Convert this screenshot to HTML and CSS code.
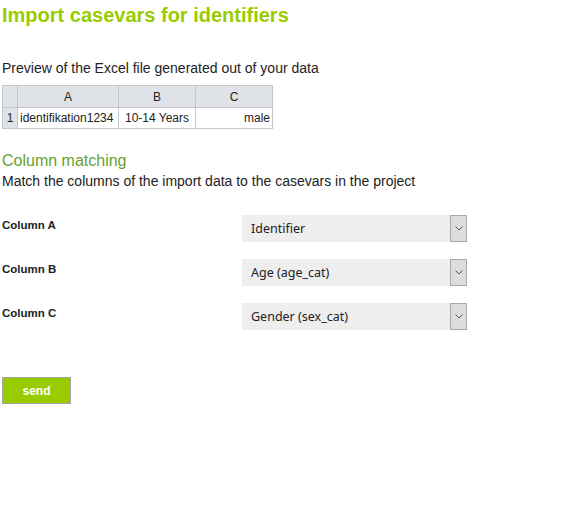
FILE: index.html
```html
<!DOCTYPE html>
<html>
<head>
<meta charset="utf-8">
<link rel="stylesheet" href="styles.css">
</head>
<body>
<div class="page">
  <h1 class="title">Import casevars for identifiers</h1>
  <p class="intro">Preview of the Excel file generated out of your data</p>
  <table class="sheet">
    <tr class="head">
      <th class="corner"></th>
      <th class="col-a">A</th>
      <th class="col-b">B</th>
      <th class="col-c">C</th>
    </tr>
    <tr>
      <th class="rownum">1</th>
      <td class="left">identifikation1234</td>
      <td class="mid">10-14 Years</td>
      <td class="right">male</td>
    </tr>
  </table>
  <h2 class="subtitle">Column matching</h2>
  <p class="desc">Match the columns of the import data to the casevars in the project</p>
  <div class="matches">
    <div class="match-row">
      <span class="label">Column A</span>
      <div class="select"><span class="value">Identifier</span><span class="arrow"><svg width="8" height="5" viewBox="0 0 8 5"><path d="M0.5 0.5 L4 4 L7.5 0.5" fill="none" stroke="#555" stroke-width="1"/></svg></span></div>
    </div>
    <div class="match-row">
      <span class="label">Column B</span>
      <div class="select"><span class="value">Age (age_cat)</span><span class="arrow"><svg width="8" height="5" viewBox="0 0 8 5"><path d="M0.5 0.5 L4 4 L7.5 0.5" fill="none" stroke="#555" stroke-width="1"/></svg></span></div>
    </div>
    <div class="match-row">
      <span class="label">Column C</span>
      <div class="select"><span class="value">Gender (sex_cat)</span><span class="arrow"><svg width="8" height="5" viewBox="0 0 8 5"><path d="M0.5 0.5 L4 4 L7.5 0.5" fill="none" stroke="#555" stroke-width="1"/></svg></span></div>
    </div>
  </div>
  <button class="send">send</button>
</div>
</body>
</html>
```
FILE: styles.css
```css
html, body {
  margin: 0;
  padding: 0;
  background: #fff;
}
.page {
  padding: 3px 2px 0;
  font-family: "Liberation Sans", Arial, sans-serif;
  color: #222;
}
.title {
  margin: 0;
  font-size: 20px;
  line-height: 24px;
  font-weight: bold;
  color: #99cc00;
}
.intro {
  margin: 33px 0 0;
  font-size: 14px;
  line-height: 17px;
}
.sheet {
  margin-top: 8px;
  border-collapse: collapse;
  font-size: 12px;
  table-layout: fixed;
}
.sheet th, .sheet td {
  border: 1px solid #c4c7cc;
  height: 20px;
  padding: 0 2px;
  font-weight: normal;
  white-space: nowrap;
}
.sheet .head th {
  height: 21px;
}
.sheet th {
  background: #dfe2e6;
  color: #222;
}
.sheet .corner, .sheet .rownum {
  width: 10px;
  text-align: center;
}
.sheet .col-a { width: 96px; }
.sheet .col-b { width: 72px; }
.sheet .col-c { width: 72px; }
.sheet td { background: #fff; }
.sheet .left { text-align: left; }
.sheet .mid { text-align: center; }
.sheet .right { text-align: right; }
.subtitle {
  margin: 22px 0 0;
  font-size: 16px;
  line-height: 20px;
  font-weight: normal;
  color: #66a032;
}
.desc {
  margin: 2px 0 0;
  font-size: 14px;
  line-height: 17px;
}
.matches {
  margin-top: 25px;
  display: flex;
  flex-direction: column;
  gap: 17px;
}
.match-row {
  display: flex;
  align-items: flex-start;
}
.label {
  width: 240px;
  font-size: 11.5px;
  font-weight: bold;
  line-height: 14px;
  padding-top: 3px;
}
.select {
  width: 225px;
  height: 27px;
  background: #eeeeee;
  display: flex;
  align-items: stretch;
  font-family: "Noto Sans", "DejaVu Sans", sans-serif;
  font-size: 12.5px;
  color: #222;
}
.value {
  flex: 1;
  padding-left: 9px;
  line-height: 28px;
}
.arrow {
  width: 15px;
  border: 1px solid #a9a9a9;
  background: #dddddd;
  display: flex;
  align-items: center;
  justify-content: center;
}
.send {
  margin-top: 47px;
  width: 69px;
  height: 27px;
  background: #99cc00;
  border: 1px solid #a6a6a6;
  color: #fff;
  font-family: "Liberation Sans", Arial, sans-serif;
  font-size: 12px;
  font-weight: bold;
  padding: 0;
  display: block;
}
```
